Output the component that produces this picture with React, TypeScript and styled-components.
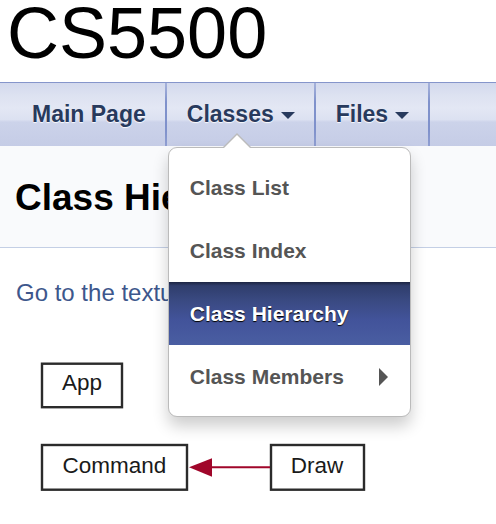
import React from "react";
import styled, { createGlobalStyle } from "styled-components";

const GlobalStyle = createGlobalStyle`
  html, body {
    margin: 0;
    padding: 0;
    background: #ffffff;
    font-family: "Liberation Sans", Arial, sans-serif;
    overflow: hidden;
  }
`;

const Page = styled.div`
  width: 496px;
  height: 524px;
  position: relative;
  overflow: hidden;
`;

const ProjectName = styled.div`
  font-size: 72px;
  line-height: 66px;
  padding: 0 0 16px 7px;
  color: #000;
  height: 66px;
`;

const NavBar = styled.nav`
  height: 63px;
  border-top: 1px solid #8595cb;
  background: linear-gradient(
    to bottom,
    #d3d9ed 0%,
    #dde2f1 20%,
    #e3e7f4 40%,
    #dce1f1 58%,
    #ccd3ea 62%,
    #c5cce6 100%
  );
  position: relative;
  z-index: 5;
`;

const NavList = styled.ul`
  display: flex;
  margin: 0;
  padding: 0 0 0 11px;
  list-style: none;
  height: 63px;
`;

const NavItem = styled.li<{ $hasSub?: boolean }>`
  position: relative;
  display: flex;
  align-items: center;
  height: 63px;
  padding: 0 ${(p) => (p.$hasSub ? "20px" : "20px")} 0 21px;
  font-size: 23px;
  font-weight: bold;
  line-height: 63px;
  color: #283a5d;
  text-shadow: 0 1px 1px rgba(255, 255, 255, 0.9);
  white-space: nowrap;
  &::after {
    content: "";
    position: absolute;
    right: -1px;
    top: 0;
    bottom: 0;
    width: 2px;
    background: linear-gradient(
      to bottom,
      rgba(120, 138, 200, 0.5) 0%,
      #7f91cb 30%,
      #7f91cb 75%,
      rgba(120, 138, 200, 0.7) 100%
    );
  }
`;

const DownArrow = styled.span`
  display: inline-block;
  width: 0;
  height: 0;
  margin-left: 7px;
  margin-top: 2px;
  border-left: 7px solid transparent;
  border-right: 7px solid transparent;
  border-top: 7px solid #283a5d;
`;

const Dropdown = styled.ul`
  position: absolute;
  left: 2px;
  top: 64px;
  width: 241px;
  margin: 0;
  padding: 8px 0;
  list-style: none;
  background: #ffffff;
  border: 1px solid #bbbbbb;
  border-radius: 9px;
  box-shadow: 0 9px 16px rgba(0, 0, 0, 0.2);
  text-shadow: none;
  z-index: 10;
  &::before {
    content: "";
    position: absolute;
    left: 54px;
    top: -15px;
    width: 0;
    height: 0;
    border-left: 14px solid transparent;
    border-right: 14px solid transparent;
    border-bottom: 14px solid #bbbbbb;
  }
  &::after {
    content: "";
    position: absolute;
    left: 55px;
    top: -13px;
    width: 0;
    height: 0;
    border-left: 13px solid transparent;
    border-right: 13px solid transparent;
    border-bottom: 13px solid #ffffff;
  }
`;

const MenuItem = styled.li<{ $active?: boolean }>`
  display: flex;
  align-items: center;
  justify-content: space-between;
  height: 63px;
  padding: 0 22px 0 21px;
  font-size: 21px;
  font-weight: bold;
  line-height: 63px;
  color: ${(p) => (p.$active ? "#ffffff" : "#555555")};
  text-shadow: ${(p) => (p.$active ? "0 1px 1px #000000" : "none")};
  background: ${(p) =>
    p.$active
      ? "linear-gradient(to bottom, #1c2442 0%, #2f3d6c 6%, #3a4a82 30%, #42539a 60%, #4a5ea2 100%)"
      : "transparent"};
`;

const RightArrow = styled.span`
  display: inline-block;
  width: 0;
  height: 0;
  border-top: 9px solid transparent;
  border-bottom: 9px solid transparent;
  border-left: 9px solid #555555;
`;

const Header = styled.div`
  height: 101px;
  background: #f9fafc;
  border-bottom: 1px solid #c4cfe5;
`;

const HeaderTitle = styled.h1`
  margin: 0;
  padding: 27px 0 0 15px;
  font-size: 37px;
  font-weight: bold;
  line-height: 50px;
  color: #000;
  white-space: nowrap;
`;

const Contents = styled.div`
  padding: 0 16px;
`;

const TextLink = styled.p`
  margin: 31px 0 0 0;
  font-size: 24px;
  line-height: 28px;
  color: #3d578c;
  white-space: nowrap;
`;

const Diagram = styled.svg`
  display: block;
  margin-top: 43px;
`;

const NodeLabel = styled.text`
  font-family: "Liberation Sans", Arial, sans-serif;
  font-size: 22.5px;
  fill: #1a1a1a;
`;

export default function App() {
  return (
    <Page>
      <GlobalStyle />
      <ProjectName>CS5500</ProjectName>
      <NavBar>
        <NavList>
          <NavItem>Main Page</NavItem>
          <NavItem $hasSub>
            Classes
            <DownArrow />
            <Dropdown>
              <MenuItem>Class List</MenuItem>
              <MenuItem>Class Index</MenuItem>
              <MenuItem $active>Class Hierarchy</MenuItem>
              <MenuItem>
                Class Members
                <RightArrow />
              </MenuItem>
            </Dropdown>
          </NavItem>
          <NavItem $hasSub>
            Files
            <DownArrow />
          </NavItem>
        </NavList>
      </NavBar>
      <Header>
        <HeaderTitle>Class Hierarchy</HeaderTitle>
      </Header>
      <Contents>
        <TextLink>Go to the textual class hierarchy</TextLink>
        <Diagram width="360" height="150" viewBox="0 0 360 150">
          <rect x="26" y="13.7" width="80" height="43.5" fill="#fff" stroke="#2b2b2b" strokeWidth="2.4" />
          <NodeLabel x="66" y="40" textAnchor="middle">App</NodeLabel>
          <rect x="26" y="95" width="145" height="44.7" fill="#fff" stroke="#2b2b2b" strokeWidth="2.4" />
          <NodeLabel x="98.5" y="123.3" textAnchor="middle">Command</NodeLabel>
          <rect x="255" y="95" width="93" height="44.7" fill="#fff" stroke="#2b2b2b" strokeWidth="2.4" />
          <NodeLabel x="301" y="123.3" textAnchor="middle">Draw</NodeLabel>
          <line x1="254" y1="117.2" x2="194" y2="117.2" stroke="#a0062a" strokeWidth="2" />
          <polygon points="173,117.2 196,108.3 196,126.7" fill="#a0062a" />
        </Diagram>
      </Contents>
    </Page>
  );
}
